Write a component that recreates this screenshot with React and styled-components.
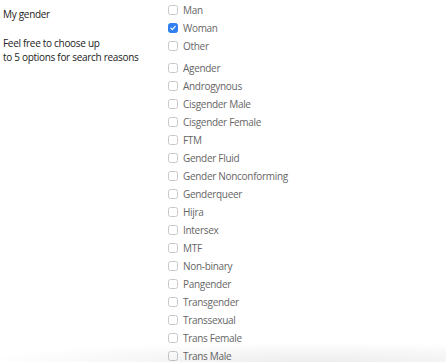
import React from 'react';
import styled, { createGlobalStyle } from 'styled-components';

const GlobalStyle = createGlobalStyle`
    body{
        margin: 0;
        background: white;
        font-family: "Open Sans", "Noto Sans", sans-serif;
    }
`

const mainOptions = ['Man', 'Woman', 'Other'];
const moreOptions = [
    'Agender', 'Androgynous', 'Cisgender Male', 'Cisgender Female', 'FTM',
    'Gender Fluid', 'Gender Nonconforming', 'Genderqueer', 'Hijra', 'Intersex',
    'MTF', 'Non-binary', 'Pangender', 'Transgender', 'Transsexual',
    'Trans Female', 'Trans Male'
];

function Option({ label, checked }) {
    return (
        <Row>
            <Box checked={checked}>
                {checked && (
                    <svg width="8" height="8" viewBox="0 0 8 8">
                        <path d="M1.8 4.2 L3.3 5.7 L6.2 2.3" fill="none" stroke="white" strokeWidth="1.2" strokeLinecap="round" strokeLinejoin="round" />
                    </svg>
                )}
            </Box>
            <span>{label}</span>
        </Row>
    )
}

export default function App() {
    return (
        <>
            <GlobalStyle />
            <Page>
                <Side>
                    <h1>My gender</h1>
                    <p>Feel free to choose up<br />to 5 options for search reasons</p>
                </Side>
                <Options>
                    <Group>
                        {mainOptions.map(o => <Option key={o} label={o} checked={o === 'Woman'} />)}
                    </Group>
                    <Group>
                        {moreOptions.map(o => <Option key={o} label={o} />)}
                    </Group>
                </Options>
                <Fade />
            </Page>
        </>
    )
}

const Page = styled.div`
    position: relative;
    display: flex;
    width: 446px;
    height: 362px;
    overflow: hidden;
    padding-top: 1px;
    box-sizing: border-box;
    font-size: 10px;
    letter-spacing: -0.3px;
`
const Side = styled.div`
    width: 168px;
    padding-left: 3px;
    box-sizing: border-box;
    color: #222;
    h1{
        font-size: 10px;
        font-weight: 400;
        margin: 0;
        padding-top: 6px;
        line-height: 14px;
    }
    p{
        margin: 15px 0 0;
        line-height: 14px;
    }
`
const Options = styled.div`
    display: flex;
    flex-direction: column;
    gap: 4px;
`
const Group = styled.div`
    display: flex;
    flex-direction: column;
`
const Row = styled.label`
    display: flex;
    align-items: center;
    height: 18px;
    gap: 5px;
    color: #666;
    white-space: nowrap;
`
const Box = styled.span`
    width: 10px;
    height: 10px;
    box-sizing: border-box;
    border-radius: 2.5px;
    border: 1px solid ${p => p.checked ? '#2f7ff0' : '#c8c8c8'};
    background: ${p => p.checked ? '#2f7ff0' : 'white'};
    display: flex;
    align-items: center;
    justify-content: center;
`
const Fade = styled.div`
    position: absolute;
    left: 0;
    right: 0;
    bottom: 0;
    height: 20px;
    pointer-events: none;
    background: radial-gradient(ellipse 75% 100% at 70% 100%, rgba(0,0,0,0.07), rgba(0,0,0,0) 100%);
`
